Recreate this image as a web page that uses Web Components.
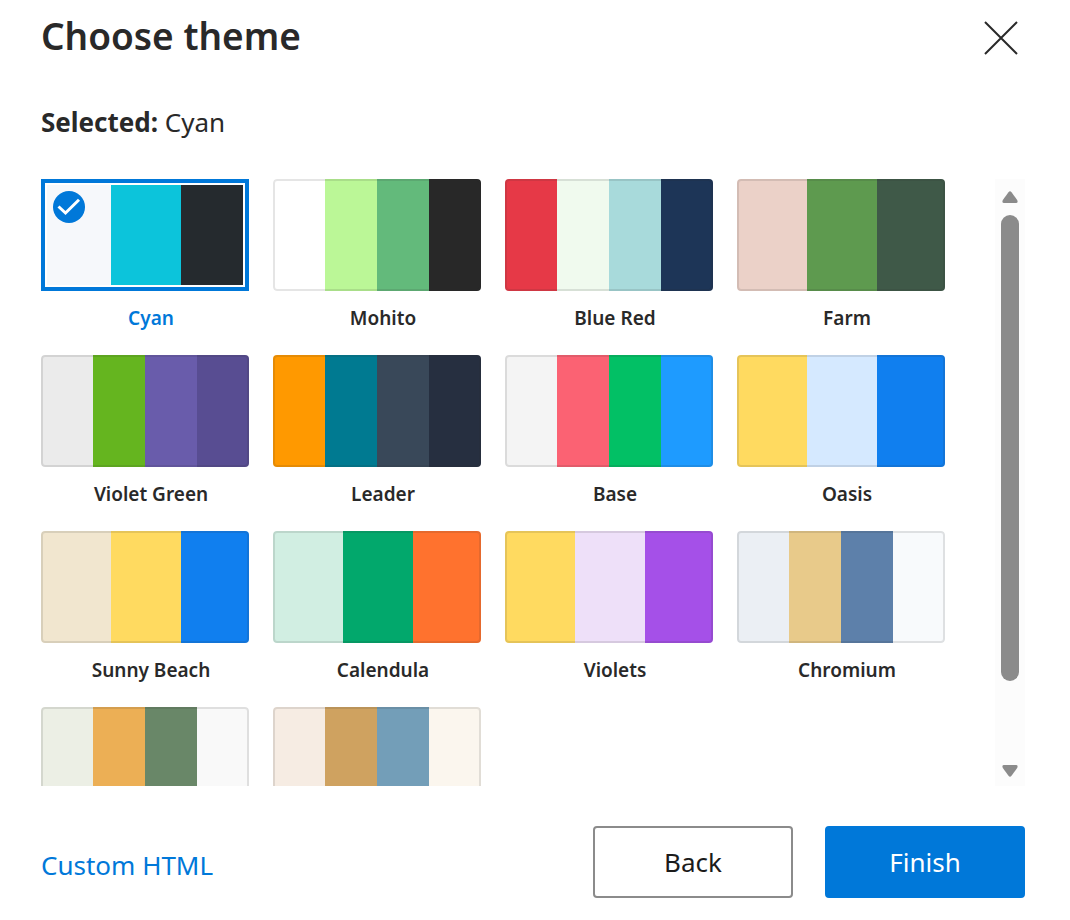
<!DOCTYPE html>
<html lang="en">
<head>
<meta charset="utf-8">
<meta name="viewport" content="width=device-width, initial-scale=1">
<title>Choose theme</title>
<style>
    body {
        margin: 0;
        background: #fff;
        color: #292929;
        font-family: "Noto Sans", "Open Sans", sans-serif;
        --accent: #0078d9;
    }
</style>
</head>
<body>
<theme-dialog>
    <span slot="title">Choose theme</span>
    <theme-card name="Cyan" colors="#f6f8fb #0cc4db #252a2e" selected></theme-card>
    <theme-card name="Mohito" colors="#ffffff #bbf797 #63ba7b #282828"></theme-card>
    <theme-card name="Blue Red" colors="#e63947 #f0faee #a8dadb #1d3557"></theme-card>
    <theme-card name="Farm" colors="#ebd1c8 #5e9a4f #3f5948"></theme-card>
    <theme-card name="Violet Green" colors="#ebebeb #65b51f #695cab #584d92"></theme-card>
    <theme-card name="Leader" colors="#ff9900 #007a91 #394859 #262f40"></theme-card>
    <theme-card name="Base" colors="#f4f4f4 #fb6273 #02c065 #1e9bff"></theme-card>
    <theme-card name="Oasis" colors="#ffda60 #d5e9ff #107fef"></theme-card>
    <theme-card name="Sunny Beach" colors="#f1e6cf #ffda60 #107fef"></theme-card>
    <theme-card name="Calendula" colors="#d1eee2 #02a86c #ff722e"></theme-card>
    <theme-card name="Violets" colors="#ffda60 #eee0f9 #a550e8"></theme-card>
    <theme-card name="Chromium" colors="#ebeff4 #e8ca8a #5d80aa #f8fafc"></theme-card>
    <theme-card name="Forest" colors="#ecefe5 #ecaf55 #698768 #f9f9f9"></theme-card>
    <theme-card name="Sand" colors="#f6ece3 #cfa260 #739eb8 #fbf6ee"></theme-card>
    <action-link slot="link" href="#custom-html">Custom HTML</action-link>
    <action-button slot="actions">Back</action-button>
    <action-button slot="actions" primary>Finish</action-button>
</theme-dialog>

<script>
class ThemeCard extends HTMLElement {
    constructor() {
        super();
        this.attachShadow({ mode: 'open' });
    }

    static get observedAttributes() {
        return ['name', 'colors', 'selected'];
    }

    attributeChangedCallback(name, oldValue, newValue) {
        if (oldValue === newValue || !this.isConnected) return;
        this.render();
    }

    connectedCallback() {
        this.render();
    }

    render() {
        const colors = this.getAttribute('colors').split(' ');
        const selected = this.hasAttribute('selected');
        const columns = colors.length === 3 ? '35fr 35fr 34fr' : `repeat(${colors.length}, 1fr)`;
        this.shadowRoot.innerHTML = `
            <style>
                :host {
                    display: block;
                }
                button {
                    display: flex;
                    flex-direction: column;
                    gap: 12px;
                    width: 100%;
                    padding: 0;
                    border: 0;
                    background: none;
                    color: inherit;
                    font: inherit;
                    cursor: pointer;
                }
                .swatch {
                    position: relative;
                    display: grid;
                    grid-template-columns: ${columns};
                    width: 100%;
                    height: 112px;
                    border-radius: 4px;
                    overflow: hidden;
                }
                .frame {
                    position: absolute;
                    inset: 0;
                    border: 2px solid rgba(40, 40, 40, 0.12);
                    border-radius: 4px;
                }
                .check {
                    display: none;
                    position: absolute;
                    top: 12px;
                    left: 12px;
                }
                .name {
                    box-sizing: border-box;
                    width: 100%;
                    padding-left: 12px;
                    font-size: 19px;
                    font-weight: 600;
                    line-height: 30px;
                    text-align: center;
                }
                [aria-pressed="true"] .swatch {
                    border-radius: 0;
                }
                [aria-pressed="true"] .frame {
                    border: 4px solid var(--accent);
                    border-radius: 0;
                    box-shadow: inset 0 0 0 2px #fff;
                }
                [aria-pressed="true"] .check {
                    display: block;
                }
                [aria-pressed="true"] .name {
                    color: var(--accent);
                }
            </style>
            <button type="button" aria-pressed="${selected}">
                <span class="swatch">
                    ${colors.map(color => `<span style="background: ${color}"></span>`).join('')}
                    <span class="frame"></span>
                    <svg class="check" width="32" height="32" viewBox="0 0 32 32" aria-hidden="true">
                        <circle cx="16" cy="16" r="16" fill="#0078d9"/>
                        <path d="M5.5 15.5L12.5 22L26 8.8" fill="none" stroke="#fff" stroke-width="3"/>
                    </svg>
                </span>
                <span class="name">${this.getAttribute('name')}</span>
            </button>
        `;
    }
}

class ScrollPanel extends HTMLElement {
    constructor() {
        super();
        this.attachShadow({ mode: 'open' });
        this.shadowRoot.innerHTML = `
            <style>
                :host {
                    display: flex;
                    min-height: 0;
                }
                .view {
                    flex: 1;
                    min-width: 0;
                    overflow-y: auto;
                    scrollbar-width: none;
                }
                .bar {
                    display: flex;
                    flex-direction: column;
                    width: 30px;
                    background: #fcfcfc;
                }
                button {
                    display: flex;
                    align-items: center;
                    justify-content: center;
                    height: 36px;
                    padding: 0;
                    border: 0;
                    background: none;
                }
                .down {
                    height: 30px;
                }
                .track {
                    flex: 1;
                    padding: 0 6px;
                }
                .thumb {
                    border-radius: 9px;
                    background: #8b8b8b;
                }
            </style>
            <div class="view"><slot></slot></div>
            <div class="bar">
                <button type="button" class="up" aria-label="Scroll up">
                    <svg width="16" height="12" viewBox="0 0 16 12"><path d="M6.5 1.3Q8-.7 9.5 1.3L15.2 9Q16.4 12 14 12H2Q-.4 12 .8 9Z" fill="#8b8b8b"/></svg>
                </button>
                <div class="track"><div class="thumb"></div></div>
                <button type="button" class="down" aria-label="Scroll down">
                    <svg width="16" height="12" viewBox="0 0 16 12"><path d="M6.5 10.7Q8 12.7 9.5 10.7L15.2 3Q16.4 0 14 0H2Q-.4 0 .8 3Z" fill="#8b8b8b"/></svg>
                </button>
            </div>
        `;
    }

    connectedCallback() {
        const view = this.shadowRoot.querySelector('.view');
        view.addEventListener('scroll', () => this.update());
        this.shadowRoot.querySelector('.up').addEventListener('click', () => view.scrollBy(0, -60));
        this.shadowRoot.querySelector('.down').addEventListener('click', () => view.scrollBy(0, 60));
        new ResizeObserver(() => this.update()).observe(view);
        this.update();
    }

    update() {
        const view = this.shadowRoot.querySelector('.view');
        const track = this.shadowRoot.querySelector('.track');
        const thumb = this.shadowRoot.querySelector('.thumb');
        const ratio = track.clientHeight / view.scrollHeight;
        thumb.style.height = `${Math.round(view.clientHeight * ratio)}px`;
        thumb.style.transform = `translateY(${Math.round(view.scrollTop * ratio)}px)`;
    }
}

class ActionButton extends HTMLElement {
    constructor() {
        super();
        this.attachShadow({ mode: 'open' });
        this.shadowRoot.innerHTML = `
            <style>
                :host {
                    display: block;
                }
                button {
                    width: 200px;
                    height: 72px;
                    border: 2px solid #8b8b8b;
                    border-radius: 4px;
                    background: #fff;
                    color: #1b1b1b;
                    font-family: inherit;
                    font-size: 26px;
                    cursor: pointer;
                }
                :host([primary]) button {
                    border-color: var(--accent);
                    background: var(--accent);
                    color: #fff;
                }
            </style>
            <button type="button"><slot></slot></button>
        `;
    }
}

class ActionLink extends HTMLElement {
    constructor() {
        super();
        this.attachShadow({ mode: 'open' });
    }

    connectedCallback() {
        this.shadowRoot.innerHTML = `
            <style>
                :host {
                    display: block;
                    padding-top: 6px;
                }
                a {
                    color: var(--accent);
                    font-size: 26px;
                    line-height: 36px;
                    text-decoration: none;
                }
                a:hover {
                    text-decoration: underline;
                }
            </style>
            <a href="${this.getAttribute('href')}"><slot></slot></a>
        `;
    }
}

class ThemeDialog extends HTMLElement {
    constructor() {
        super();
        this.attachShadow({ mode: 'open' });
        this.shadowRoot.innerHTML = `
            <style>
                :host {
                    display: flex;
                    flex-direction: column;
                    box-sizing: border-box;
                    height: 100vh;
                    padding: 11px 45px 22px 41px;
                }
                header {
                    display: flex;
                    align-items: flex-start;
                    justify-content: space-between;
                }
                h1 {
                    margin: 0;
                    font-size: 37px;
                    font-weight: 600;
                    line-height: 50px;
                }
                .close {
                    display: flex;
                    align-items: center;
                    justify-content: center;
                    width: 48px;
                    height: 54px;
                    padding: 0;
                    border: 0;
                    background: none;
                    cursor: pointer;
                }
                .selected {
                    margin: 38px 0;
                    font-size: 26px;
                    line-height: 38px;
                }
                scroll-panel {
                    flex: 1;
                }
                .grid {
                    display: grid;
                    grid-template-columns: repeat(auto-fill, 208px);
                    gap: 22px 24px;
                    padding-bottom: 22px;
                }
                footer {
                    display: flex;
                    align-items: center;
                    justify-content: space-between;
                    margin-top: 40px;
                }
                .actions {
                    display: flex;
                    gap: 32px;
                }
            </style>
            <header>
                <h1><slot name="title"></slot></h1>
                <button type="button" class="close" aria-label="Close">
                    <svg width="34" height="34" viewBox="0 0 34 34"><path d="M1 1L33 33M33 1L1 33" stroke="#292929" stroke-width="2"/></svg>
                </button>
            </header>
            <p class="selected"><b>Selected:</b> <span class="current"></span></p>
            <scroll-panel><div class="grid"><slot></slot></div></scroll-panel>
            <footer>
                <slot name="link"></slot>
                <div class="actions"><slot name="actions"></slot></div>
            </footer>
        `;
    }

    connectedCallback() {
        this.showCurrent();
        this.addEventListener('click', event => {
            const card = event.target.closest('theme-card');
            if (!card) return;
            this.querySelectorAll('theme-card').forEach(item => item.toggleAttribute('selected', item === card));
            this.showCurrent();
        });
    }

    showCurrent() {
        const card = this.querySelector('theme-card[selected]');
        this.shadowRoot.querySelector('.current').textContent = card.getAttribute('name');
    }
}

customElements.define('theme-card', ThemeCard);
customElements.define('scroll-panel', ScrollPanel);
customElements.define('action-button', ActionButton);
customElements.define('action-link', ActionLink);
customElements.define('theme-dialog', ThemeDialog);
</script>
</body>
</html>
